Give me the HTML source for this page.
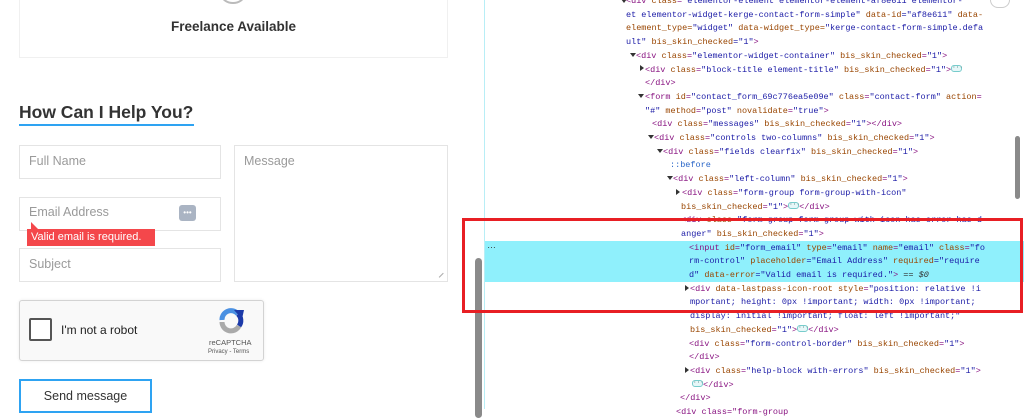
<!DOCTYPE html>
<html><head><meta charset="utf-8"><style>
*{margin:0;padding:0;box-sizing:border-box}
body{width:1024px;height:409px;overflow:hidden;background:#fff;position:relative;font-family:"Liberation Sans",sans-serif}
.a{position:absolute}
.box{position:absolute;border:1px solid #e4e4e4;background:#fff}
.ph{position:absolute;color:#9a9a9a;font-size:12.5px}
.l{position:absolute;font-family:"Liberation Mono",monospace;font-size:8.5px;line-height:13.7px;white-space:pre;color:#881280}
.n{color:#994500}.v{color:#1a1aa6}.b{color:#2a66c8}
.ar{position:absolute;width:0;height:0;border-left:3px solid transparent;border-right:3px solid transparent;border-top:4px solid #333}
.ar.r{border-top:3px solid transparent;border-bottom:3px solid transparent;border-left:4px solid #333;border-right:0}
.bd{display:inline-block;width:11px;height:7px;border:1px solid #7cc;border-radius:3px;background:#e6f7f8;vertical-align:middle;position:relative;top:-1px;font-size:6px;line-height:4px;text-align:center;color:#366}
</style></head><body>
<div class="box" style="left:19px;top:-2px;width:429px;height:60px;border-color:#f0f0f0"></div>
<div class="a" style="left:221px;top:-14px;width:24px;height:18px;border:2px solid #bbb;border-radius:50%"></div>
<div class="a" style="left:19px;top:19px;width:429px;text-align:center;font-weight:bold;font-size:13.5px;color:#333">Freelance Available</div>
<div class="a" style="left:19px;top:102px;font-weight:bold;font-size:17.5px;color:#333">How Can I Help You?</div>
<div class="a" style="left:19px;top:124px;width:175px;height:2px;background:#2ea3f2"></div>
<div class="box" style="left:19px;top:145px;width:202px;height:34px"></div>
<div class="ph" style="left:29px;top:154px">Full Name</div>
<div class="box" style="left:19px;top:197px;width:202px;height:34px"></div>
<div class="ph" style="left:29px;top:205px">Email Address</div>
<div class="a" style="left:179px;top:205px;width:17px;height:16px;background:#aab4c3;border-radius:3px;color:#fff;font-size:8px;text-align:center;line-height:15px">•••</div>
<div class="a" style="left:31px;top:222px;width:0;height:0;border-left:7px solid #f4474b;border-top:7px solid transparent"></div>
<div class="a" style="left:27px;top:229px;width:128px;height:17px;background:#f4474b;color:#fff;font-size:11px;line-height:17px;padding-left:4px">Valid email is required.</div>
<div class="box" style="left:19px;top:248px;width:202px;height:34px"></div>
<div class="ph" style="left:29px;top:257px">Subject</div>
<div class="box" style="left:234px;top:145px;width:214px;height:137px"></div>
<div class="ph" style="left:244px;top:154px">Message</div>
<div class="a" style="left:440px;top:274px;width:6px;height:6px;border-top:1px solid #aaa;transform:rotate(-45deg)"></div>
<div class="a" style="left:19px;top:300px;width:245px;height:61px;background:#f9f9f9;border:1px solid #d3d3d3;border-radius:3px;box-shadow:0 0 3px rgba(0,0,0,.08)"></div>
<div class="a" style="left:29px;top:318px;width:23px;height:23px;background:#fff;border:2px solid #555;border-radius:2px"></div>
<div class="a" style="left:61px;top:323px;font-size:12px;color:#222">I'm not a robot</div>
<svg class="a" style="left:218px;top:308px" width="28" height="26" viewBox="0 0 28 26"><path d="M4 12 A9 9 0 0 1 20 6" stroke="#4a90e2" stroke-width="5" fill="none"/><path d="M20 6 A9 9 0 0 1 21 18" stroke="#1c3aa9" stroke-width="5" fill="none"/><path d="M21 18 A9 9 0 0 1 4 14" stroke="#aaa" stroke-width="5" fill="none"/><path d="M16 2 L26 2 L24 11 Z" fill="#1c3aa9"/></svg>
<div class="a" style="left:209px;top:338px;font-size:7.5px;color:#555">reCAPTCHA</div>
<div class="a" style="left:208px;top:349px;font-size:6px;color:#555">Privacy - Terms</div>
<div class="a" style="left:19px;top:379px;width:133px;height:34px;border:2px solid #2ea3f2;background:#fff"></div>
<div class="a" style="left:19px;top:389px;width:133px;text-align:center;font-size:12.5px;color:#333">Send message</div>

<div class="a" style="left:470px;top:0;width:554px;height:409px;background:#fff"></div>
<div class="a" style="left:484px;top:0;width:1px;height:409px;background:#b8eef6"></div>
<div class="a" style="left:475px;top:258px;width:7px;height:160px;background:#8a8a8a;border-radius:4px"></div>
<div class="a" style="left:1015px;top:136px;width:5px;height:63px;background:#8a8a8a;border-radius:3px"></div>
<div class="a" style="left:485px;top:241px;width:539px;height:41px;background:#8ff0fc"></div>
<div class="a" style="left:487px;top:240px;font-size:9px;color:#333">…</div>
<div class="a" style="left:990px;top:-8px;width:20px;height:16px;border-radius:8px;background:#fff;border:1px solid #ccc"></div>

<div class="ar" style="left:621px;top:-1px"></div>
<div class="l" style="left:626px;top:-5px">&lt;div <span class="n">class</span>=<span class="v">"elementor-element elementor-element-af8e611 elementor-</span></div>
<div class="l v" style="left:626px;top:8.7px">et elementor-widget-kerge-contact-form-simple" <span class="n">data-id</span>="af8e611" <span class="n">data-</span></div>
<div class="l n" style="left:626px;top:22.4px">element_type=<span class="v">"widget"</span> data-widget_type=<span class="v">"kerge-contact-form-simple.defa</span></div>
<div class="l v" style="left:626px;top:36.1px">ult" <span class="n">bis_skin_checked</span>="1"<span style="color:#881280">&gt;</span></div>
<div class="ar" style="left:630px;top:53px"></div>
<div class="l" style="left:636px;top:49.8px">&lt;div <span class="n">class</span>=<span class="v">"elementor-widget-container"</span> <span class="n">bis_skin_checked</span>=<span class="v">"1"</span>&gt;</div>
<div class="ar r" style="left:640px;top:65px"></div>
<div class="l" style="left:645px;top:63.5px">&lt;div <span class="n">class</span>=<span class="v">"block-title element-title"</span> <span class="n">bis_skin_checked</span>=<span class="v">"1"</span>&gt;<span class="bd">···</span></div>
<div class="l" style="left:645px;top:77.2px">&lt;/div&gt;</div>
<div class="ar" style="left:638px;top:94px"></div>
<div class="l" style="left:645px;top:90.9px">&lt;form <span class="n">id</span>=<span class="v">"contact_form_69c776ea5e09e"</span> <span class="n">class</span>=<span class="v">"contact-form"</span> <span class="n">action</span>=</div>
<div class="l" style="left:645px;top:104.6px"><span class="v">"#"</span> <span class="n">method</span>=<span class="v">"post"</span> <span class="n">novalidate</span>=<span class="v">"true"</span>&gt;</div>
<div class="l" style="left:652px;top:118.3px">&lt;div <span class="n">class</span>=<span class="v">"messages"</span> <span class="n">bis_skin_checked</span>=<span class="v">"1"</span>&gt;&lt;/div&gt;</div>
<div class="ar" style="left:648px;top:135px"></div>
<div class="l" style="left:654px;top:132px">&lt;div <span class="n">class</span>=<span class="v">"controls two-columns"</span> <span class="n">bis_skin_checked</span>=<span class="v">"1"</span>&gt;</div>
<div class="ar" style="left:657px;top:149px"></div>
<div class="l" style="left:663px;top:145.7px">&lt;div <span class="n">class</span>=<span class="v">"fields clearfix"</span> <span class="n">bis_skin_checked</span>=<span class="v">"1"</span>&gt;</div>
<div class="l b" style="left:670px;top:159.4px">::before</div>
<div class="ar" style="left:667px;top:176px"></div>
<div class="l" style="left:673px;top:173.1px">&lt;div <span class="n">class</span>=<span class="v">"left-column"</span> <span class="n">bis_skin_checked</span>=<span class="v">"1"</span>&gt;</div>
<div class="ar r" style="left:676px;top:189px"></div>
<div class="l" style="left:682px;top:186.8px">&lt;div <span class="n">class</span>=<span class="v">"form-group form-group-with-icon"</span></div>
<div class="l" style="left:681px;top:200.5px"><span class="n">bis_skin_checked</span>=<span class="v">"1"</span>&gt;<span class="bd">···</span>&lt;/div&gt;</div>
<div class="l" style="left:681px;top:214.2px">&lt;div <span class="n">class</span>=<span class="v">"form-group form-group-with-icon has-error has-d</span></div>
<div class="l" style="left:681px;top:227.9px"><span class="v">anger"</span> <span class="n">bis_skin_checked</span>=<span class="v">"1"</span>&gt;</div>
<div class="l" style="left:689px;top:241.6px">&lt;input <span class="n">id</span>=<span class="v">"form_email"</span> <span class="n">type</span>=<span class="v">"email"</span> <span class="n">name</span>=<span class="v">"email"</span> <span class="n">class</span>=<span class="v">"fo</span></div>
<div class="l v" style="left:689px;top:255.3px">rm-control" <span class="n">placeholder</span>="Email Address" <span class="n">required</span>="require</div>
<div class="l v" style="left:689px;top:269px">d" <span class="n">data-error</span>="Valid email is required."<span style="color:#881280">&gt;</span> <span style="color:#333">== <i>$0</i></span></div>
<div class="ar r" style="left:685px;top:285px"></div>
<div class="l" style="left:690px;top:282.7px">&lt;div <span class="n">data-lastpass-icon-root</span> <span class="n">style</span>=<span class="v">"position: relative !i</span></div>
<div class="l v" style="left:690px;top:296.4px">mportant; height: 0px !important; width: 0px !important;</div>
<div class="l v" style="left:690px;top:310.1px">display: initial !important; float: left !important;"</div>
<div class="l" style="left:690px;top:323.8px"><span class="n">bis_skin_checked</span>=<span class="v">"1"</span>&gt;<span class="bd">···</span>&lt;/div&gt;</div>
<div class="l" style="left:689px;top:337.5px">&lt;div <span class="n">class</span>=<span class="v">"form-control-border"</span> <span class="n">bis_skin_checked</span>=<span class="v">"1"</span>&gt;</div>
<div class="l" style="left:689px;top:351.2px">&lt;/div&gt;</div>
<div class="ar r" style="left:685px;top:367px"></div>
<div class="l" style="left:690px;top:364.9px">&lt;div <span class="n">class</span>=<span class="v">"help-block with-errors"</span> <span class="n">bis_skin_checked</span>=<span class="v">"1"</span>&gt;</div>
<div class="l" style="left:692px;top:378.6px"><span class="bd">···</span>&lt;/div&gt;</div>
<div class="l" style="left:680px;top:392.3px">&lt;/div&gt;</div>
<div class="l" style="left:676px;top:406px">&lt;div class="form-group</div>

<div class="a" style="left:462px;top:218px;width:561px;height:95px;border:3px solid #e81f24"></div>
</body></html>
